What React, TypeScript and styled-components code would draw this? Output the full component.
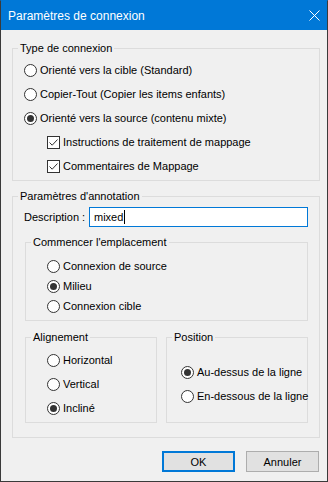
import React from "react";
import styled, { createGlobalStyle } from "styled-components";

const Global = createGlobalStyle`
  html, body { margin: 0; padding: 0; background: #f0f0f0; }
  body { font-family: "Liberation Sans", Arial, sans-serif; font-size: 11px; color: #000; }
`;

const Window = styled.div`
  width: 328px;
  height: 482px;
  box-sizing: border-box;
  border: 1px solid #3a3a3a;
  border-top-color: #0078d7;
  background: #f0f0f0;
  display: flex;
  flex-direction: column;
`;

const TitleBar = styled.div`
  height: 29px;
  flex: none;
  background: #0078d7;
  color: #fff;
  display: flex;
  align-items: center;
  justify-content: space-between;
  padding: 0 7px 0 7px;
  font-size: 12px;
`;

const Body = styled.div`
  display: flex;
  flex-direction: column;
  padding: 10px 7px 0 11px;
`;

const Group = styled.fieldset<{ $pt?: number; $pb?: number; $mt?: number; $ml?: number; $mr?: number; $w?: number }>`
  margin: ${(p) => p.$mt ?? 0}px ${(p) => p.$mr ?? 0}px 0 ${(p) => p.$ml ?? 0}px;
  padding: ${(p) => p.$pt ?? 0}px 0 ${(p) => p.$pb ?? 0}px 0;
  border: 1px solid #dcdcdc;
  min-width: 0;
  display: flex;
  flex-direction: column;
  ${(p) => (p.$w ? `width: ${p.$w}px; flex: none;` : "")}
`;

const FlexGroup = styled(Group)`
  flex: 1;
`;

const Legend = styled.legend`
  margin-left: 5px;
  padding: 0 2px;
  line-height: 16px;
  font-size: 11px;
`;

const Row = styled.div<{ $h?: number; $indent?: number }>`
  height: ${(p) => p.$h ?? 24}px;
  display: flex;
  align-items: center;
  padding-left: ${(p) => p.$indent ?? 0}px;
  white-space: nowrap;
`;

const RadioCircle = styled.span<{ $on?: boolean }>`
  width: 13px;
  height: 13px;
  box-sizing: border-box;
  border: 1px solid #333;
  border-radius: 50%;
  background: #fff;
  display: flex;
  align-items: center;
  justify-content: center;
  margin-right: 3px;
  flex: none;
  &::after {
    content: "";
    display: ${(p) => (p.$on ? "block" : "none")};
    width: 7px;
    height: 7px;
    border-radius: 50%;
    background: #333;
  }
`;

const CheckBox = styled.span`
  width: 13px;
  height: 13px;
  box-sizing: border-box;
  border: 1px solid #333;
  background: #fff;
  display: flex;
  margin-right: 3px;
  flex: none;
`;

const Radio = ({ on, label }: { on?: boolean; label: string }) => (
  <>
    <RadioCircle $on={on} />
    <span>{label}</span>
  </>
);

const Check = ({ label }: { label: string }) => (
  <>
    <CheckBox>
      <svg width="11" height="11" viewBox="0 0 11 11">
        <path d="M1.5 5.5 L4.2 8.2 L9.5 2.5" fill="none" stroke="#333" strokeWidth="1" />
      </svg>
    </CheckBox>
    <span>{label}</span>
  </>
);

const DescRow = styled.div`
  display: flex;
  align-items: center;
  padding: 3px 11px 0 11px;
`;

const Label = styled.span`
  width: 65px;
  flex: none;
  white-space: nowrap;
`;

const TextBox = styled.div`
  flex: 1;
  height: 20px;
  box-sizing: border-box;
  border: 1px solid #0078d7;
  background: #fff;
  display: flex;
  align-items: center;
  padding-left: 4px;
`;

const Caret = styled.span`
  width: 1px;
  height: 14px;
  background: #000;
  margin-left: 1px;
`;

const Split = styled.div`
  display: flex;
  gap: 9px;
  margin: 8px 11px 0 12px;
`;

const Buttons = styled.div`
  display: flex;
  justify-content: flex-end;
  gap: 11px;
  margin-top: 13px;
  padding-right: 1px;
`;

const Button = styled.button<{ $def?: boolean }>`
  width: 73px;
  height: 21px;
  box-sizing: border-box;
  font-family: inherit;
  font-size: 11px;
  color: #000;
  background: #e1e1e1;
  border: ${(p) => (p.$def ? "2px solid #0078d7" : "1px solid #adadad")};
  padding: 0;
`;

export default function App() {
  return (
    <>
      <Global />
      <Window>
        <TitleBar>
          <span>Paramètres de connexion</span>
          <svg width="11" height="11" viewBox="0 0 11 11">
            <path d="M0.5 0.5 L10.5 10.5 M10.5 0.5 L0.5 10.5" stroke="#fff" strokeWidth="1" />
          </svg>
        </TitleBar>
        <Body>
          <Group $pt={2} $pb={2}>
            <Legend>Type de connexion</Legend>
            <Row $indent={11}><Radio label="Orienté vers la cible (Standard)" /></Row>
            <Row $indent={11}><Radio label="Copier-Tout (Copier les items enfants)" /></Row>
            <Row $indent={11}><Radio on label="Orienté vers la source (contenu mixte)" /></Row>
            <Row $indent={34}><Check label="Instructions de traitement de mappage" /></Row>
            <Row $indent={34}><Check label="Commentaires de Mappage" /></Row>
          </Group>
          <Group $mt={7} $pb={14}>
            <Legend>Paramètres d'annotation</Legend>
            <DescRow>
              <Label>Description :</Label>
              <TextBox>mixed<Caret /></TextBox>
            </DescRow>
            <Group $mt={7} $ml={12} $mr={11} $pt={6} $pb={4}>
              <Legend>Commencer l'emplacement</Legend>
              <Row $h={20} $indent={21}><Radio label="Connexion de source" /></Row>
              <Row $h={20} $indent={21}><Radio on label="Milieu" /></Row>
              <Row $h={20} $indent={21}><Radio label="Connexion cible" /></Row>
            </Group>
            <Split>
              <Group $w={130} $pt={3} $pb={2}>
                <Legend>Alignement</Legend>
                <Row $indent={21}><Radio label="Horizontal" /></Row>
                <Row $indent={21}><Radio label="Vertical" /></Row>
                <Row $indent={21}><Radio on label="Incliné" /></Row>
              </Group>
              <FlexGroup $pt={15}>
                <Legend>Position</Legend>
                <Row $indent={14}><Radio on label="Au-dessus de la ligne" /></Row>
                <Row $indent={14}><Radio label="En-dessous de la ligne" /></Row>
              </FlexGroup>
            </Split>
          </Group>
          <Buttons>
            <Button $def>OK</Button>
            <Button>Annuler</Button>
          </Buttons>
        </Body>
      </Window>
    </>
  );
}
